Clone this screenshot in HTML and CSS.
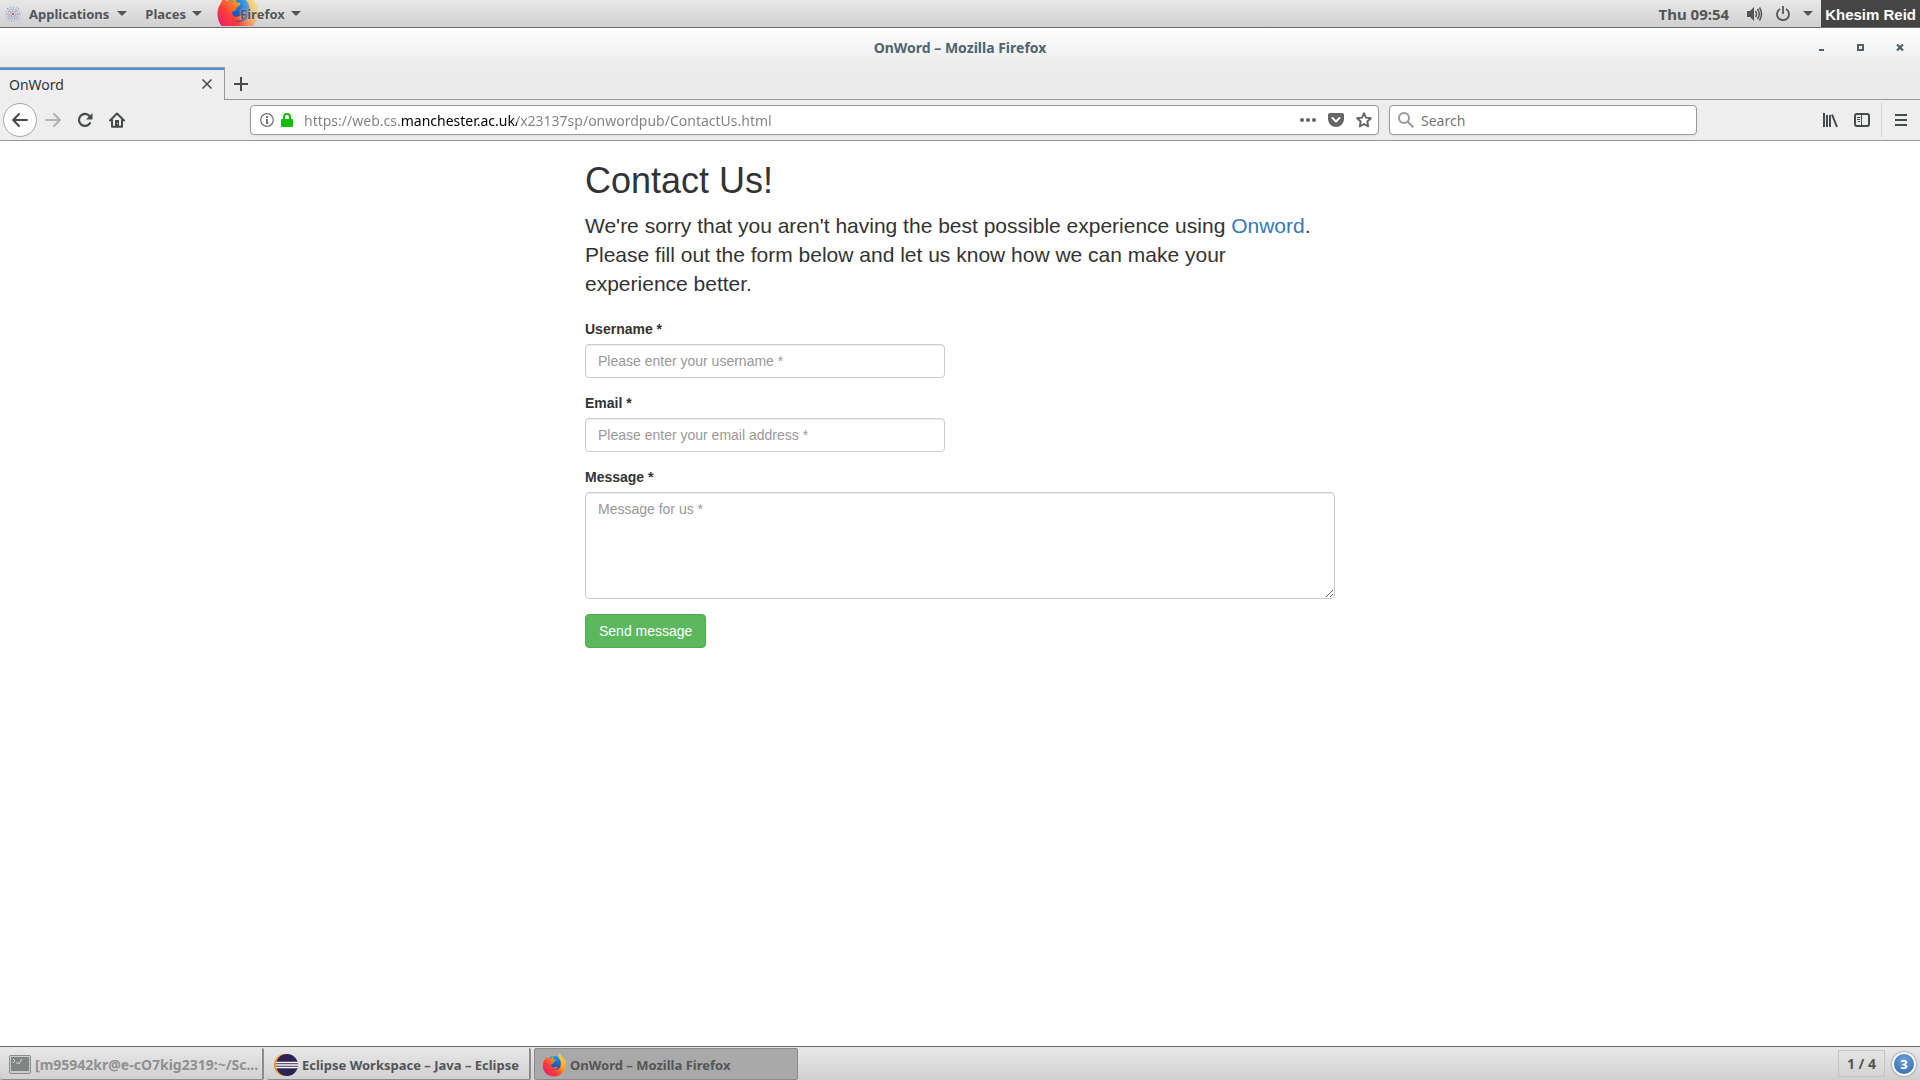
FILE: index.html
```html
<!DOCTYPE html>
<html lang="en">
<head>
<meta charset="utf-8">
<meta name="viewport" content="width=device-width, initial-scale=1">
<title>OnWord</title>
<link rel="stylesheet" href="styles.css">
</head>
<body>
<svg class="defs" width="0" height="0" aria-hidden="true">
  <defs>
    <linearGradient id="flame" x1="1" y1="0" x2="0" y2="1">
      <stop offset="0" stop-color="#fff44f"/><stop offset=".35" stop-color="#ffa51e"/>
      <stop offset=".65" stop-color="#ff3a3a"/><stop offset="1" stop-color="#d9168c"/>
    </linearGradient>
    <linearGradient id="globe" x1="0" y1="0" x2="0" y2="1">
      <stop offset="0" stop-color="#0c9cf5"/><stop offset="1" stop-color="#2a2c8c"/>
    </linearGradient>
    <linearGradient id="fade">
      <stop offset=".5" stop-color="#fff"/><stop offset="1" stop-color="#fff" stop-opacity=".3"/>
    </linearGradient>
    <mask id="fademask"><rect width="44" height="26" fill="url(#fade)"/></mask>
    <symbol id="firefox" viewBox="0 0 24 24">
      <circle cx="12.500" cy="11.500" r="8.500" fill="url(#globe)"/>
      <path fill="url(#flame)" d="M4.600 3.500c.3 1 .8 1.700 1.300 2 1-.4 2.200-.4 3.200 0 .6-1 1.600-1.700 2.700-2-.6.900-.8 1.900-.4 2.700.9.400 2 .4 2.200.9.200.9-1.400 1.500-2.200 2.200-.2.700 0 1.400-.9 1.700-1 .2-1.700.6-1.500 1.500.4 1.800 2.500 2.300 4.300 1.500 1-.5 2-.5 2.600.2-.6 1.900-3.300 2.800-5.600 2.200 3.700 2 8.300-.4 8.500-5.200.2-3-.9-4.800-2.200-6.200-.5-2 .1-3.800 1.200-5 .4 2.300 2 3.200 3.300 4.800.8 1 1.100 2 1.300 3 .3-.6.400-1.300.3-2 2.600 6.500-.4 17.700-10.700 17.700C5.500 23.500.8 18.800.8 12.800c0-3.600 1.600-5.200 2.200-6.600.3-1 .8-2 1.600-2.700z"/>
    </symbol>
  </defs>
</svg>

<header class="panel">
  <nav class="panel-menus" aria-label="Desktop">
    <button class="panel-menu apps" type="button">
      <svg width="16" height="16" viewBox="0 0 16 16" fill="none" stroke="#8288c4" stroke-dasharray="1.500 1"><circle cx="8" cy="8" r="3"/><circle cx="8" cy="8" r="5"/><circle cx="8" cy="8" r="7" stroke-dasharray="1 2"/><path stroke="#a09cd0" d="M2 2l12 12M14 2L2 14"/><circle cx="8" cy="8" r="1" fill="#c0392b" stroke="none"/></svg>
      Applications<span class="caret"></span>
    </button>
    <button class="panel-menu" type="button">Places<span class="caret"></span></button>
    <button class="panel-menu active-app" type="button">
      <svg class="app-icon" width="44" height="26" viewBox="0 0 44 26"><g mask="url(#fademask)"><use href="#firefox" x="0" y="-9" width="43" height="43"/></g></svg>
      <span class="app-name">Firefox</span><span class="caret"></span>
    </button>
  </nav>
  <div class="panel-status">
    <time class="clock">Thu 09:54</time>
    <button class="panel-system" type="button" aria-label="System menu">
      <svg width="16" height="16" viewBox="0 0 16 16"><path fill="#555" d="M0 5h3l4-4v14l-4-4H0z"/><path fill="none" stroke="#555" stroke-width="1.500" d="M8.500 5q2 3 0 6M10.500 3q3.500 5 0 10M12.500 1.500q4 6.500 0 13"/></svg>
      <svg width="16" height="16" viewBox="0 0 16 16"><path fill="none" stroke="#555" stroke-width="1.800" d="M5 3a6 6 0 1 0 6 0M8 0v8"/></svg>
      <span class="caret"></span>
    </button>
    <span class="user">Khesim Reid</span>
  </div>
</header>

<div class="window">
  <div class="titlebar">
    <span class="window-title">OnWord – Mozilla Firefox</span>
    <div class="window-controls">
      <button type="button" aria-label="Minimize"><svg width="8" height="8" viewBox="0 0 8 8"><path fill="#4b626c" d="M1 5h5v2H1z"/></svg></button>
      <button type="button" aria-label="Maximize"><svg width="8" height="8" viewBox="0 0 8 8"><path fill="none" stroke="#4b626c" stroke-width="2" d="M1 1h5v5H1z"/></svg></button>
      <button type="button" aria-label="Close"><svg width="8" height="8" viewBox="0 0 8 8"><path stroke="#4b626c" stroke-width="2.200" d="M1 .5l6 6M7 .5l-6 6"/></svg></button>
    </div>
  </div>
  <div class="tabs">
    <div class="tab"><span>OnWord</span>
      <button type="button" aria-label="Close tab"><svg width="10" height="10" viewBox="0 0 10 10"><path stroke="#454a4c" stroke-width="1.500" d="M.5.500l9 9M9.500.500l-9 9"/></svg></button>
    </div>
    <button class="new-tab" type="button" aria-label="New tab"><svg width="14" height="14" viewBox="0 0 14 14"><path stroke="#454a4c" stroke-width="2" d="M7 0v14M0 7h14"/></svg></button>
  </div>
  <div class="toolbar">
    <div class="nav-buttons">
      <button class="back" type="button" aria-label="Back"><svg width="16" height="16" viewBox="0 0 16 16"><path fill="none" stroke="#454a4c" stroke-width="2" stroke-linecap="round" stroke-linejoin="round" d="M15 8H1.500M7 2L1.200 8 7 14"/></svg></button>
      <button type="button" aria-label="Forward" disabled><svg width="16" height="16" viewBox="0 0 16 16"><path fill="none" stroke="#b0b2b3" stroke-width="2" stroke-linecap="round" stroke-linejoin="round" d="M1 8h13.500M9 2l5.800 6L9 14"/></svg></button>
      <button type="button" aria-label="Reload"><svg width="16" height="16" viewBox="0 0 16 16"><path fill="none" stroke="#454a4c" stroke-width="2.200" stroke-linecap="round" d="M13 11.200A6 6 0 1 1 12.500 4"/><path fill="#454a4c" d="M15.500 1v6.500H9z"/></svg></button>
      <button type="button" aria-label="Home"><svg width="16" height="16" viewBox="0 0 16 16"><path fill="none" stroke="#454a4c" stroke-width="2" stroke-linecap="round" stroke-linejoin="round" d="M1 8.500l7-7 7 7M3 8v6.800h10V8"/><path fill="#454a4c" d="M6 8h4v7H6z"/><path fill="#eee" d="M8 11h1v1H8z"/></svg></button>
    </div>
    <div class="field url-field">
      <svg width="14" height="14" viewBox="0 0 14 14"><circle cx="7" cy="7" r="6.300" fill="none" stroke="#6e6e6e" stroke-width="1.200"/><path fill="#6e6e6e" d="M6 6h2v5H6zM6 3h2v2H6z"/></svg>
      <svg width="12" height="14" viewBox="0 0 12 14"><rect y="6" width="12" height="8" rx="1" fill="#12bc00"/><path fill="none" stroke="#12bc00" stroke-width="2" d="M3 7V4a3 3 0 0 1 6 0v3"/></svg>
      <input class="url" type="text" aria-label="Address" value="https://web.cs.manchester.ac.uk/x23137sp/onwordpub/ContactUs.html">
      <div class="field-actions">
        <button type="button" aria-label="Page actions"><svg width="16" height="16" viewBox="0 0 16 16" fill="#666"><circle cx="2" cy="8" r="2"/><circle cx="8" cy="8" r="2"/><circle cx="14" cy="8" r="2"/></svg></button>
        <button type="button" aria-label="Save to Pocket"><svg width="16" height="16" viewBox="0 0 16 16"><path fill="#666" d="M2 1h12a2 2 0 0 1 2 2v4A8 8 0 0 1 0 7V3a2 2 0 0 1 2-2z"/><path fill="none" stroke="#fff" stroke-width="2" stroke-linecap="round" stroke-linejoin="round" d="M4.500 6L8 9.500 11.500 6"/></svg></button>
        <button type="button" aria-label="Bookmark"><svg width="16" height="16" viewBox="0 0 16 16"><path fill="none" stroke="#666" stroke-width="1.900" stroke-linejoin="round" d="M8 1.200l2 4.400 4.900.6-3.600 3.300.9 4.900L8 12l-4.200 2.400.9-4.900L1.100 6.200 6 5.600z"/></svg></button>
      </div>
    </div>
    <div class="field search-field">
      <svg width="16" height="16" viewBox="0 0 16 16" fill="none" stroke="#999" stroke-width="2"><circle cx="6" cy="6" r="5"/><path d="M9.800 9.800l5.500 5.500"/></svg>
      <input type="search" placeholder="Search" aria-label="Search">
    </div>
    <div class="tool-buttons">
      <button type="button" aria-label="Library"><svg width="16" height="16" viewBox="0 0 16 16" fill="none" stroke="#454a4c" stroke-width="2"><path d="M2 1v14M5 3v12M8 3v12M10 2.500L15 15"/></svg></button>
      <button type="button" aria-label="Sidebars"><svg width="16" height="16" viewBox="0 0 16 16" fill="none" stroke="#454a4c"><rect x="1" y="2" width="14" height="12" rx="2" stroke-width="2"/><path d="M7.500 2v12M3 5.500h3M3 7.500h3M4 9.500h2"/></svg></button>
      <button class="menu" type="button" aria-label="Menu"><svg width="12" height="12" viewBox="0 0 12 12"><path stroke="#454a4c" stroke-width="2" d="M0 1h12M0 6h12M0 11h12"/></svg></button>
    </div>
  </div>

  <main class="page">
    <div class="content">
      <h1>Contact Us!</h1>
      <p class="lead">We're sorry that you aren't having the best possible experience using <a href="#">Onword</a>. Please fill out the form below and let us know how we can make your experience better.</p>
      <form>
        <div class="group half">
          <label for="username">Username *</label>
          <input class="control" id="username" type="text" placeholder="Please enter your username *">
        </div>
        <div class="group half">
          <label for="email">Email *</label>
          <input class="control" id="email" type="email" placeholder="Please enter your email address *">
        </div>
        <div class="group">
          <label for="message">Message *</label>
          <textarea class="control" id="message" placeholder="Message for us *"></textarea>
        </div>
        <button class="send" type="submit">Send message</button>
      </form>
    </div>
  </main>
</div>

<footer class="taskbar">
  <div class="tasks">
    <button class="task minimized" type="button">
      <svg width="22" height="20" viewBox="0 0 22 20"><rect x=".5" y=".5" width="21" height="18" rx="1" fill="#ccc" stroke="#8b8b8b"/><path fill="#808583" d="M2 2h18v14H2z"/><path fill="none" stroke="#d4d4d4" d="M4 4l2 2-2 2M7 8h3M13 4l-3 5"/></svg>
      <span>[m95942kr@e-cO7kig2319:~/Sc...</span>
    </button>
    <button class="task" type="button">
      <svg width="24" height="22" viewBox="0 0 24 22"><circle cx="11" cy="11" r="11" fill="#f7941e"/><circle cx="13" cy="11" r="11" fill="#2c2255"/><path stroke="#fff" stroke-width="1.500" d="M2 8.500h22M2 11h22M2 13.500h22"/></svg>
      <span>Eclipse Workspace – Java – Eclipse</span>
    </button>
    <button class="task current" type="button">
      <svg width="24" height="24" viewBox="0 0 24 24"><use href="#firefox" width="24" height="24"/></svg>
      <span>OnWord – Mozilla Firefox</span>
    </button>
  </div>
  <div class="tray">
    <button class="workspace" type="button">1 / 4</button>
    <button class="notices" type="button" aria-label="3 notifications">3</button>
  </div>
</footer>
</body>
</html>
```
FILE: styles.css
```css
* { box-sizing: border-box; }

body {
  margin: 0;
  min-height: 100vh;
  display: flex;
  flex-direction: column;
  background: #fff;
  font-family: "Noto Sans", "Open Sans", sans-serif;
  font-size: 14px;
  color: #333;
}

button {
  margin: 0;
  padding: 0;
  border: 0;
  background: none;
  font: inherit;
  color: inherit;
  display: flex;
  align-items: center;
  justify-content: center;
}

input, textarea { margin: 0; font: inherit; }
svg { flex: none; display: block; }
.defs { position: absolute; }

/* desktop panel */
.panel {
  display: flex;
  justify-content: space-between;
  height: 28px;
  border-bottom: 1px solid #6b6b6b;
  background: linear-gradient(#e8e8e8, #d0d0d0);
  font-size: 13px;
  font-weight: 700;
  color: #555;
}
.panel-menus { display: flex; gap: 18px; padding-left: 5px; }
.panel-menu { gap: 6px; }
.apps { gap: 8px; }
.active-app { position: relative; padding-left: 20px; }
.app-icon { position: absolute; left: -4px; top: 0; }
.app-name { position: relative; text-shadow: 0 0 2px #eee; }
.caret {
  border: 5px solid transparent;
  border-top-color: #555;
  border-bottom: 0;
}
.panel-status { display: flex; align-items: center; }
.clock { font-size: 15px; }
.panel-system { gap: 12px; padding: 0 8px 0 18px; }
.user {
  align-self: stretch;
  display: flex;
  align-items: center;
  padding: 2px 4px 0;
  background: #454545;
  color: #fff;
  font-family: "Liberation Sans", Arial, sans-serif;
  font-size: 15px;
}

/* browser window */
.window { flex: 1; display: flex; flex-direction: column; }
.titlebar {
  display: grid;
  grid-template-columns: 1fr auto 1fr;
  align-items: center;
  height: 39px;
  background: linear-gradient(#fefefe, #ececec);
  color: #4f646d;
}
.window-title { grid-column: 2; font-weight: 700; }
.window-controls {
  display: flex;
  justify-content: flex-end;
  gap: 31px;
  padding-right: 16px;
}
.tabs {
  display: flex;
  height: 33px;
  background: linear-gradient(#979999, #979999) bottom / 100% 1px no-repeat #ececec;
}
.tab {
  width: 225px;
  display: flex;
  align-items: center;
  justify-content: space-between;
  padding: 0 12px 0 9px;
  border-top: 1px solid #a0a0a0;
  border-right: 1px solid #979999;
  background: linear-gradient(#4a90d9, #4a90d9) top / 100% 2px no-repeat #eee;
}
.new-tab { width: 32px; }
.toolbar {
  display: flex;
  align-items: center;
  height: 41px;
  padding: 0 13px 0 3px;
  border-bottom: 1px solid #979999;
  background: #eee;
}
.nav-buttons { display: flex; align-items: center; width: 247px; gap: 16px; }
.back {
  width: 34px;
  height: 34px;
  border: 1px solid #a5a5a5;
  border-radius: 50%;
  background: #fcfcfc;
}
.back + button { margin-left: -8px; }
.field {
  display: flex;
  align-items: center;
  height: 30px;
  border: 1px solid #999;
  border-radius: 4px;
  background: #fff;
  box-shadow: 0 1px 3px rgba(0, 0, 0, .06);
}
.field input {
  flex: 1;
  min-width: 0;
  padding: 0;
  border: 0;
  outline: 0;
  background: none;
}
.field input::placeholder { color: #777; opacity: 1; }
.url-field { flex: 1; gap: 7px; padding: 0 6px 0 9px; }
/* the address dims everything but the site's domain */
.field .url {
  margin-left: 4px;
  color: #808080;
  background: linear-gradient(90deg, #808080 97px, #000 97px, #000 213px, #808080 213px);
  -webkit-background-clip: text;
  background-clip: text;
  -webkit-text-fill-color: transparent;
}
.field-actions { display: flex; gap: 12px; }
.search-field { width: 308px; margin-left: 10px; padding: 0 8px; gap: 7px; }
.tool-buttons {
  display: flex;
  align-items: center;
  justify-content: flex-end;
  gap: 16px;
  width: 210px;
}
.menu {
  height: 34px;
  margin-left: -5px;
  padding-left: 13px;
  border-left: 1px solid #d2d2d2;
}

/* contact page */
.page {
  flex: 1;
  background: #fff;
  font-family: "Liberation Sans", Arial, sans-serif;
}
.content { max-width: 750px; margin: 0 auto; padding-top: 20px; }
h1 { margin: 0 0 10px; font-size: 36px; font-weight: 400; line-height: 40px; }
.lead { margin: 0 0 21px; padding-right: 20px; font-size: 21px; line-height: 29px; }
.lead a { color: #337ab7; text-decoration: none; }
.group { margin-bottom: 15px; }
.half { width: 48%; }
.group label {
  display: block;
  margin-bottom: 5px;
  font-weight: 700;
  line-height: 20px;
}
.control {
  display: block;
  width: 100%;
  height: 34px;
  padding: 6px 12px;
  border: 1px solid #ccc;
  border-radius: 4px;
  background: #fff;
  line-height: 20px;
  box-shadow: inset 0 1px 1px rgba(0, 0, 0, .075);
}
textarea.control { height: 107px; resize: vertical; }
.control::placeholder { color: #999; opacity: 1; }
.send {
  height: 34px;
  padding: 0 13px;
  border: 1px solid #4cae4c;
  border-radius: 4px;
  background: #5cb85c;
  color: #fff;
}

/* window list */
.taskbar {
  display: flex;
  justify-content: space-between;
  height: 34px;
  border-top: 1px solid #6b6b6b;
  background: linear-gradient(#e8e8e8, #d0d0d0);
  font-size: 13px;
  font-weight: 700;
  color: #555;
}
.tasks { display: flex; gap: 3px; padding-top: 1px; }
.task {
  width: 264px;
  justify-content: flex-start;
  gap: 4px;
  padding: 2px 0 0 9px;
  border-right: 2px solid #8c8c8c;
  border-bottom: 1px solid #8c8c8c;
  border-radius: 2px;
  white-space: nowrap;
}
.minimized { color: #909090; font-size: 14px; }
.task + .task { padding-left: 7px; }
.current {
  border: 1px solid #8a8a8a;
  background: #a9a9a9;
}
.tray { display: flex; align-items: center; gap: 7px; padding-right: 4px; }
.workspace {
  width: 47px;
  height: 27px;
  border: 1px solid #c4c4c4;
  font-size: 14px;
}
.notices {
  width: 24px;
  height: 24px;
  border: 2px solid #f4f4f4;
  border-radius: 50%;
  background: radial-gradient(circle at 50% 30%, #6c9fdc, #3465a4);
  box-shadow: 0 0 2px #555;
  color: #fff;
}
```
